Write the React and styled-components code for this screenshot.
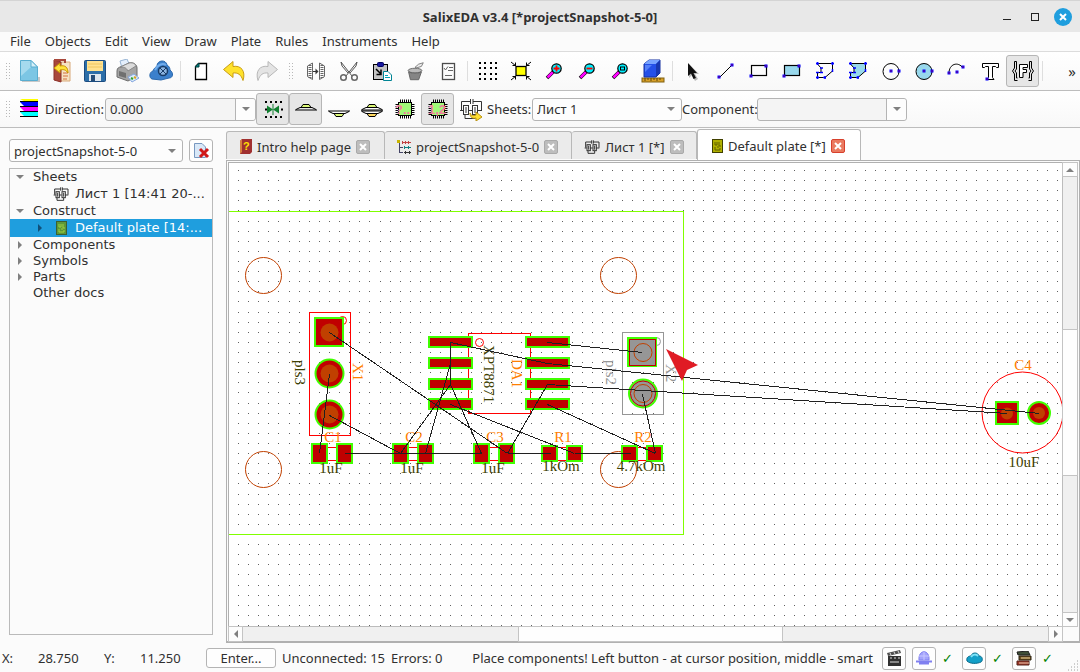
import React from 'react'
import styled, { createGlobalStyle } from 'styled-components'

const GlobalStyle = createGlobalStyle`
  html, body, #root {
    height: 100%;
  }
  body {
    margin: 0;
    background: #fbfbfb;
    color: #303030;
    font-family: 'Noto Sans', 'Open Sans', sans-serif;
    font-size: 13px;
    overflow: hidden;
  }
  * {
    box-sizing: border-box;
  }
  button, select {
    font: inherit;
    color: inherit;
    padding: 0;
    margin: 0;
  }
  svg {
    display: block;
    flex: none;
  }
`

const Window = styled.div`
  display: flex;
  flex-direction: column;
  height: 100vh;
`

const TitleBar = styled.header`
  display: grid;
  grid-template-columns: 1fr auto 1fr;
  align-items: center;
  flex: none;
  height: 32px;
  background: #e8e8e8;
  border-top: 1px solid #d4d4d4;
`

const Title = styled.h1`
  grid-column: 2;
  margin: 0;
  font-family: 'Open Sans', 'Noto Sans', sans-serif;
  font-size: 13px;
  font-weight: 700;
`

const WindowButtons = styled.div`
  display: flex;
  justify-content: flex-end;
  align-items: center;
  gap: 10px;
  padding-right: 8px;
`

const WindowButton = styled.button`
  display: flex;
  align-items: center;
  justify-content: center;
  width: 18px;
  height: 18px;
  border: 0;
  border-radius: 50%;
  background: ${(props) => (props.$close ? '#1f9ede' : 'transparent')};
`

const MenuBar = styled.nav`
  display: flex;
  align-items: flex-start;
  flex: none;
  height: 20px;
  padding-left: 10px;
  gap: 14px;
  border-bottom: 1px solid #dcdcdc;
`

const MenuItem = styled.button`
  border: 0;
  background: none;
  line-height: 18px;
`

const ToolBar = styled.div`
  display: flex;
  align-items: center;
  flex: none;
  height: ${(props) => props.$height}px;
  background: linear-gradient(#ffffff, #f8f8f8);
  border-bottom: 1px solid #bdbdbd;
`

const ToolButton = styled.button`
  display: flex;
  align-items: center;
  justify-content: center;
  flex: none;
  width: 33px;
  height: 32px;
  border: 1px solid ${(props) => (props.$checked ? '#b6b6b6' : 'transparent')};
  border-radius: 3px;
  background: ${(props) => (props.$checked ? '#e6e6e6' : 'none')};
`

const Separator = styled.div`
  flex: none;
  width: 1px;
  height: 20px;
  margin: 0 3px;
  background: #dedede;
`

const Handle = styled.div`
  flex: none;
  width: 5px;
  height: 18px;
  margin: 0 ${(props) => (props.$first ? 2 : 6)}px 0 5px;
  background: radial-gradient(circle, #b8b8b8 1px, transparent 1px) 0 0 / 3px 3px;
`

const Overflow = styled.button`
  margin-left: auto;
  margin-right: 4px;
  border: 0;
  background: none;
  font-size: 15px;
`

const FieldLabel = styled.label`
  flex: none;
  width: ${(props) => props.$width}px;
  white-space: nowrap;
`

const Combo = styled.div`
  display: flex;
  align-items: stretch;
  flex: none;
  width: ${(props) => props.$width}px;
  height: 23px;
  border: 1px solid #b4b4b4;
  border-radius: 3px;
  background: ${(props) => (props.$editable ? '#f4f4f4' : '#fdfdfd')};
  select {
    flex: 1;
    min-width: 0;
    padding-left: 4px;
    border: 0;
    background: none;
    appearance: none;
  }
`

const ComboArrow = styled.span`
  display: flex;
  align-items: center;
  justify-content: center;
  width: 20px;
  border-left: ${(props) => (props.$editable ? '1px solid #b4b4b4' : '0')};
  background: ${(props) => (props.$editable ? '#fdfdfd' : 'none')};
  border-radius: 0 3px 3px 0;
`

const Main = styled.main`
  display: flex;
  flex: 1;
  min-height: 0;
`

const Side = styled.aside`
  display: flex;
  flex-direction: column;
  flex: none;
  width: 226px;
  padding: 11px 13px 9px 9px;
`

const ProjectRow = styled.div`
  display: flex;
  justify-content: space-between;
  margin-bottom: 6px;
`

const SmallButton = styled.button`
  display: flex;
  align-items: center;
  justify-content: center;
  flex: none;
  width: 24px;
  height: 23px;
  border: 1px solid #b4b4b4;
  border-radius: 3px;
  background: #fefefe;
`

const Tree = styled.ul`
  flex: 1;
  margin: 0;
  padding: 0;
  list-style: none;
  border: 1px solid #bababa;
  font-family: 'DejaVu Sans', sans-serif;
  line-height: 16px;
`

const TreeRow = styled.li`
  display: flex;
  align-items: center;
  height: ${(props) => (props.$tall ? 18 : 16)}px;
  padding-left: ${(props) => props.$level * 20 + 6}px;
  background: ${(props) => (props.$selected ? '#1f9ede' : 'none')};
  color: ${(props) => (props.$selected ? '#ffffff' : 'inherit')};
  white-space: nowrap;
`

const TreeArrow = styled.div`
  display: flex;
  flex: none;
  width: 17px;
`

const TreeIcon = styled.div`
  display: flex;
  justify-content: center;
  flex: none;
  width: 16px;
  margin-right: 6px;
`

const Work = styled.section`
  display: flex;
  flex-direction: column;
  flex: 1;
  min-width: 0;
`

const TabBar = styled.div`
  display: flex;
  align-items: flex-end;
  flex: none;
  height: 32px;
`

const Tab = styled.div`
  display: flex;
  align-items: center;
  flex: none;
  width: ${(props) => props.$width}px;
  height: ${(props) => (props.$active ? 31 : 28)}px;
  margin-bottom: ${(props) => (props.$active ? 0 : 1)}px;
  padding: 2px 0 0 ${(props) => (props.$active ? 14 : 12)}px;
  gap: 5px;
  border: solid #b8b8b8;
  border-width: 1px 1px 0 ${(props) => (props.$first || props.$active ? 1 : 0)}px;
  background: ${(props) => (props.$active ? '#ffffff' : '#ebebeb')};
  border-radius: 3px 3px 0 0;
`

const TabLabel = styled.button`
  border: 0;
  background: none;
  white-space: nowrap;
`

const TabClose = styled.button`
  display: flex;
  align-items: center;
  justify-content: center;
  flex: none;
  width: 14px;
  height: 14px;
  border: 1px solid ${(props) => (props.$active ? '#d8402c' : '#a9a9a9')};
  border-radius: 2px;
  background: ${(props) => (props.$active ? '#ea7a60' : '#bdbdbd')};
`

const Frame = styled.div`
  display: grid;
  grid-template-columns: 1fr 16px;
  grid-template-rows: 1fr 15px;
  flex: 1;
  min-height: 0;
  margin-bottom: 1px;
  padding: 1px 1px 0 1px;
  border: 1px solid #b0b0b0;
  border-bottom-width: 2px;
  background: #fbfbfb;
`

const Board = styled.svg`
  width: 100%;
  height: 100%;
  min-width: 0;
  background: #ffffff;
  border: solid #b0b0b0;
  border-width: 1px 0 0 1px;
  text {
    font-family: 'Liberation Serif', serif;
    font-size: 15px;
  }
`

const ScrollBar = styled.div`
  display: flex;
  flex-direction: ${(props) => (props.$vertical ? 'column' : 'row')};
  min-width: 0;
  min-height: 0;
  background: #f0f0f0;
  border: solid #bcbcbc;
  border-width: ${(props) => (props.$vertical ? '1px 1px 0 1px' : '1px 0 0 1px')};
`

const ScrollEnd = styled.button`
  display: flex;
  align-items: center;
  justify-content: center;
  flex: 0 0 13px;
  border: 0;
  background: #fdfdfd;
  outline: 1px solid #c4c4c4;
`

const Track = styled.div`
  flex: ${(props) => props.$size};
`

const Thumb = styled.div`
  flex: ${(props) => props.$size};
  background: #fefefe;
  outline: 1px solid #c4c4c4;
`

const StatusBar = styled.footer`
  display: flex;
  align-items: center;
  flex: none;
  height: 28px;
  padding: 0 2px;
`

const Coord = styled.span`
  flex: none;
  width: ${(props) => props.$width}px;
`

const EnterButton = styled.button`
  flex: none;
  width: 70px;
  height: 20px;
  margin-right: 6px;
  border: 1px solid #b4b4b4;
  border-radius: 3px;
  background: #fefefe;
  line-height: 18px;
`

const StatusText = styled.span`
  flex: none;
  margin-right: 6px;
  white-space: nowrap;
`

const Hint = styled(StatusText)`
  margin-left: auto;
  margin-right: 9px;
`

const Services = styled.div`
  display: flex;
  align-items: center;
  gap: 6px;
`

const Check = styled.span`
  width: 14px;
  color: #008000;
  font-family: 'DejaVu Sans', sans-serif;
`

const SizeGrip = styled.svg`
  align-self: flex-end;
  margin-left: 12px;
`

const Down = ({ color = '#808080' }) => (
  <svg width="8" height="4"><path d="M0 0H8L4 4Z" fill={color} /></svg>
)

const Icon = ({ children, size = 24 }) => (
  <svg width={size} height={size} viewBox="0 0 24 24" fill="none" stroke="#000">{children}</svg>
)

const Dot = ({ x, y }) => <rect x={x - 1} y={y - 1} width="2" height="2" fill="#f00" stroke="#00f" />

const NewFile = () => (
  <Icon>
    <path d="M5 22H22V18" stroke="#c8c8c8" strokeWidth="2" />
    <path d="M3.5 1.5H14L20.5 8V21.5H3.5Z" fill="#7cc6e4" stroke="#58add0" />
    <path d="M4 2H14V8L4 17Z" fill="#a5daee" stroke="none" />
    <path d="M14 1.5V8H20.5Z" fill="#d6f0f9" stroke="#58add0" />
  </Icon>
)

const OpenFile = () => (
  <Icon>
    <path d="M9 3H20V22H9Z" fill="#f6e3c4" stroke="#d8a878" />
    <path d="M4 1L11 3V23L4 21Z" fill="#a8483c" stroke="#8c3028" />
    <path d="M4 1H15V4" stroke="#a8483c" strokeWidth="2" />
    <path d="M13 14H18M13 17H18M13 20H17" stroke="#d47040" />
    <path d="M4 9L10 4V7C15 6 18 8 18 14C16 11 14 10 10 11V14Z" fill="#ffe23c" stroke="#c79400" />
  </Icon>
)

const Save = () => (
  <Icon>
    <rect x="1.5" y="1.5" width="21" height="21" rx="1" fill="#2c6ea8" stroke="#1c4c80" />
    <rect x="4" y="2" width="16" height="10" fill="#ffe290" stroke="none" />
    <path d="M5 5H19M5 8H19" stroke="#eec660" />
    <rect x="6" y="15" width="12" height="7" fill="#dde6ee" stroke="none" />
    <rect x="8" y="16" width="4" height="6" fill="#244c78" stroke="none" />
  </Icon>
)

const Print = () => (
  <Icon>
    <path d="M6 9L4 2L11 0L14 7Z" fill="#e4effc" stroke="#98b4d4" />
    <path d="M1 12C1 9 3 8 5 8L13 4C18 3 21 6 21 9V17L12 22L1 18Z" fill="#a4a4a4" stroke="#6c6c6c" />
    <path d="M4 8L13 4C18 3 20 6 20 7L12 12C10 8 7 8 4 8Z" fill="#dcdcdc" stroke="#888" />
    <path d="M3 12L10 14V19L3 17Z" fill="#707070" stroke="none" />
    <path d="M12 18L18 15L23 19L16 23Z" fill="#d8ecf8" stroke="#88a8e0" />
    <path d="M15 19L17 20" stroke="#30a030" strokeWidth="2" />
    <path d="M18 18L20 19" stroke="#e0a020" strokeWidth="2" />
  </Icon>
)

const Cloud = () => (
  <Icon>
    <path d="M3 20C0 19 0 13 4 12C5 9 7 8 8 7C8 1 17 0 18 6C20 7 21 9 21 11C25 14 24 19 20 19L12 21Z" fill="#3c80cc" stroke="#2c68ac" />
    <path d="M6 11C9 5 14 4 17 6" stroke="#70acec" strokeWidth="2" />
    <circle cx="14" cy="12" r="4.500" fill="#8cb4e0" stroke="#183c68" strokeWidth="1.500" />
    <path d="M11 9L17 15M17 9L11 15" stroke="#183c68" />
  </Icon>
)

const Page = () => (
  <Icon>
    <path d="M9.500 4.500H17.500V20.500H6.500V7.500Z" fill="#fff" strokeWidth="1.300" />
    <path d="M6 8L10 4V8Z" fill="#008080" stroke="#004040" />
  </Icon>
)

const Undo = ({ redo }) => (
  <Icon>
    <path
      d="M1.500 10.500L11 2.500V7.500C19 6 24 12 21 21.500C19 15.500 16 13.500 11 14V18.500Z"
      transform={redo ? 'translate(24 0) scale(-1 1)' : undefined}
      fill={redo ? '#e4e4e4' : '#ffe22c'}
      stroke={redo ? '#b8b8b8' : '#c89c14'}
      strokeLinejoin="round"
    />
  </Icon>
)

const Mirror = () => (
  <Icon>
    <g stroke="#666">
      <path d="M3.500 7L8.500 4V20.500L3.500 17.500Z" />
      <path d="M20.500 7L15.500 4V20.500L20.500 17.500Z" />
      <path d="M6 6V19M18 6V19" strokeDasharray="1 1" strokeWidth="3" />
      <path d="M9 12.500H13" stroke="#333" />
    </g>
    <path d="M11.500 9.500L14.500 12.500L11.500 15.500Z" fill="#333" stroke="none" />
  </Icon>
)

const Cut = () => (
  <Icon>
    <path d="M4 3L15 17M20 3L9 17M4 3L5 7L11 14M20 3L19 7L13 14" stroke="#555" />
    <circle cx="6.500" cy="18.500" r="2.800" stroke="#666" strokeWidth="1.500" />
    <circle cx="17.500" cy="18.500" r="2.800" stroke="#666" strokeWidth="1.500" />
  </Icon>
)

const Paste = () => (
  <Icon>
    <rect x="3.500" y="5.500" width="14" height="15" fill="#c4c4c4" />
    <rect x="7.500" y="3.500" width="6" height="4" rx="1" fill="#1818a0" stroke="#000060" />
    <path d="M6 10L11 15M11 10.500V15.500H6.500" strokeWidth="1.500" />
    <path d="M13.500 12.500H18L21.500 16V21.500H13.500Z" fill="#fff" stroke="#008494" />
    <path d="M15 16.500H18M15 18.500H20" stroke="#00a4b4" />
  </Icon>
)

const Bin = () => (
  <Icon size={22}>
    <ellipse cx="12" cy="11.500" rx="7.500" ry="2.500" fill="#bbb" stroke="#666" />
    <path d="M5 13L7 21.500H16L19 13C15 15 9 15 5 13Z" fill="#858585" stroke="#606060" />
    <path d="M12 8L16 4.500L21 3L19 7L14 8.500Z" fill="#eee" stroke="#777" />
  </Icon>
)

const CheckList = () => (
  <Icon>
    <rect x="6.500" y="4.500" width="12" height="16" stroke="#4c4c4c" strokeWidth="1.300" />
    <path d="M8 9L9.500 11L12 7.500M13 8.500H17M12 11.500H17M9 16.500H16" stroke="#666" />
  </Icon>
)

const dots = [4, 9, 15, 20]
const GridDots = () => (
  <Icon>
    {dots.map((y) => dots.map((x) => (
      <rect key={`${x}-${y}`} x={x - 1} y={y - 1} width="2" height="2" fill="#000" stroke="none" />
    )))}
  </Icon>
)

const Fit = () => (
  <Icon>
    <rect x="7" y="7.500" width="10" height="9" fill="#ff0" strokeWidth="1.300" />
    <path d="M2 3L7 7M22 3L17 7M2 21L7 17M22 21L17 17" />
    <path d="M3.500 6.500H6.500V3.500M20.500 6.500H17.500V3.500M3.500 17.500H6.500V20.500M20.500 17.500H17.500V20.500" />
  </Icon>
)

const Zoom = ({ kind }) => (
  <Icon>
    <path d="M5 19L11 13" stroke="#000" strokeWidth="3.500" />
    <path d="M5.500 18.500L11 13" stroke="#f0f" strokeWidth="2.500" />
    <circle cx="14.500" cy="9.500" r="4.700" fill="#00f0ff" strokeWidth="1.200" />
    {kind === 'all'
      ? <rect x="12.500" y="8" width="4" height="3" />
      : <path d={kind === 'in' ? 'M11.500 9.500H17.500M14.500 6.500V12.500' : 'M11.500 9.500H17.500'} stroke="#f00" strokeWidth="1.800" />}
  </Icon>
)

const Box3d = () => (
  <Icon>
    <rect x="1" y="19" width="22" height="4" fill="#d8a028" stroke="#806010" />
    <path d="M4 19V22M7 19V21M10 19V22M13 19V21M16 19V22M19 19V21" stroke="#604808" />
    <path d="M3 5L8 1H19V14L15 18H3Z" fill="#2450e8" stroke="#1430a0" />
    <path d="M3 5L8 1H19L15 5Z" fill="#78a4ff" stroke="none" />
    <path d="M15 5L19 1V14L15 18Z" fill="#1838b0" stroke="none" />
    <path d="M4 6H11L4 13Z" fill="#5480f8" stroke="none" />
  </Icon>
)

const Pointer = () => (
  <Icon>
    <path d="M8 5V19L11 16L14 22L17 20L14 15H18Z" fill="#bbb" stroke="none" />
    <path d="M7 4V17L10 14.500L12.500 20L15 19L12.500 14H16Z" fill="#111" stroke="none" />
  </Icon>
)

const LineIcon = () => (
  <Icon><path d="M5 19L19 5" /><Dot x={5} y={18} /><Dot x={18} y={6} /></Icon>
)

const RectIcon = ({ fill }) => (
  <Icon><rect x="4.500" y="6.500" width="15" height="10" fill={fill} strokeWidth="1.200" /><Dot x={4} y={17} /><Dot x={19} y={7} /></Icon>
)

const PolyIcon = ({ fill }) => (
  <Icon>
    <path d="M4 4.500H19.500V12L12 18.500H4.500V13.500H8V9Z" fill={fill} />
    <path d="M4.500 3V6M3 4.500H6M19.500 3V6M18 4.500H21M19.500 10V13M12 17V20M10 18.500H13M4.500 17V20M3 18.500H6M3 13.500H6M7 13.500H10M7 9H10" stroke="#00f" strokeWidth="1.500" />
  </Icon>
)

const CircleIcon = ({ fill }) => (
  <Icon><circle cx="12" cy="12.500" r="8" fill={fill} /><Dot x={12} y={12} /><Dot x={20} y={12} /></Icon>
)

const ArcIcon = () => (
  <Icon><path d="M4 14C4 5 13 2 18 9" /><Dot x={4} y={14} /><Dot x={12} y={13} /><Dot x={18} y={8} /></Icon>
)

const TextIcon = () => (
  <Icon>
    <path d="M4.500 4.500H20.500V8.500H18.500L17.500 7.500H14.500V18.500L16 20.500H9L10.500 18.500V7.500H7.500L6.500 8.500H4.500Z" fill="#fff" />
    <Dot x={9} y={20} />
  </Icon>
)

const ParamIcon = () => (
  <Icon>
    <path d="M5.500 2.500H3.500V9L1.500 12L3.500 15V21.500H6.500M5.500 2.500V10L4 12L5.500 14V19H6.500" />
    <path d="M18.500 2.500H20.500V9L22.500 12L20.500 15V21.500H17.500M18.500 2.500V10L20 12L18.500 14V19H17.500" />
    <path d="M8.500 5.500H16.500V8.500H12V10.500H15.500V13.500H12V18.500H8.500Z" fill="#fff" />
  </Icon>
)

const Layers = () => (
  <svg width="18" height="20" viewBox="0 0 18 20">
    <path d="M0 0H18V2H4Z" fill="#ff0" />
    <path d="M0 3H18V7H4Z" fill="#00f" />
    <path d="M0 8H18V12H4Z" fill="#f0f" />
    <path d="M0 13H18V17H4Z" fill="#0ff" />
    <path d="M0 2.500H18M0 7.500H18M0 12.500H18M0 17.500H18" stroke="#000" />
  </svg>
)

const AlignIcon = () => (
  <Icon>
    <path d="M4 5H22M4 12.500H6M20 12.500H22M4 20H22" strokeDasharray="2 3" strokeWidth="2" />
    <path d="M6 8.500L12 12.500L6 16.500ZM18 8.500L12 12.500L18 16.500Z" fill="#108030" stroke="none" />
    <path d="M12 7V18" stroke="#108030" />
  </Icon>
)

const topPart = 'M7 10.500L9 7.500H15L17 10.500Z'

const SideIcon = ({ top, bottom }) => (
  <Icon>
    {top && (
      <g>
        <path d="M1 13H23M2 12.500L6 10.500H18L22 12.500" />
        <path d={topPart} fill="#dcf878" />
      </g>
    )}
    {bottom && (
      <g transform="translate(0 27) scale(1 -1)">
        <path d="M1 13H23M2 12.500L6 10.500H18L22 12.500" />
        <path d={topPart} fill={top ? '#ffd860' : '#dcf878'} />
      </g>
    )}
  </Icon>
)

const ChipIcon = ({ label }) => (
  <Icon>
    <rect x="5.500" y="5.500" width="13" height="13" fill="#a0f878" />
    <path d="M7 4H18M7 20H18" strokeDasharray="1 1" strokeWidth="3" />
    <path d="M4 7V18M20 7V18" strokeDasharray="1 1" strokeWidth="3" />
    <text x="2" y="17" fill="#f080a0" stroke="none" fontFamily="Liberation Sans" fontSize="13" fontWeight="700">{label}</text>
  </Icon>
)

const SheetIcon = ({ arrow, size }) => (
  <Icon size={size}>
    <g stroke="#333" strokeWidth={arrow ? 1 : 1.5}>
      <path d="M1 13.500H4M9 13.500H13M18 13.500H23M2.500 13V4.500H11M14 4.500H22.500V13M11.500 2V7M14 2V7M6 18V21.500H16V18" />
      <rect x="4.500" y="8.500" width="5" height="9" />
      <rect x="13.500" y="8.500" width="5" height="9" />
      <path d="M7 10V16M16 10V16" />
    </g>
    {arrow && <path d="M11 16C12 19 14 19 17 18V15L23 20L17 24V21C13 22 11 20 11 16Z" fill="#ffe030" stroke="#b89010" />}
  </Icon>
)

const PlateIcon = ({ selected }) => (
  <svg width="11" height="14" viewBox="0 0 11 14">
    <rect x="0.500" y="0.500" width="10" height="13" fill={selected ? '#5c9838' : '#b0b000'} stroke={selected ? '#3c6030' : '#404000'} />
    <path d="M3 3V6H5V3M7 3V7H9M3 8V11H8V9M5 8H7" fill="none" stroke={selected ? '#a0d040' : '#606000'} />
  </svg>
)

const HelpIcon = () => (
  <svg width="13" height="15" viewBox="0 0 13 15">
    <path d="M1 2L3 0H13V13L11 15H1Z" fill="#a03030" />
    <path d="M1 2L3 0V13L1 15Z" fill="#d88040" />
    <text x="4" y="11" fill="#ffe000" fontFamily="Liberation Sans" fontSize="11" fontWeight="700">?</text>
  </svg>
)

const ProjectIcon = () => (
  <svg width="14" height="14" viewBox="0 0 14 14" fill="none" shapeRendering="crispEdges">
    <path d="M2.500 1V12.500H6M2.500 7.500H6" stroke="#446" />
    <rect x="0" y="0" width="3" height="3" fill="#c8b400" />
    <path d="M5 2.500H14M5 1V4M8.500 1V4M11.500 1V4" stroke="#c04040" />
    <path d="M7 7.500H14M7.500 6V9M11.500 6V9" stroke="#108080" />
    <path d="M7 12.500H14M8.500 11V14M12.500 11V14" stroke="#333" />
  </svg>
)

const Cross = () => (
  <svg width="8" height="8" viewBox="0 0 8 8"><path d="M1 1L7 7M7 1L1 7" stroke="#fff" strokeWidth="2" /></svg>
)

const ClosePage = () => (
  <svg width="17" height="17" viewBox="0 0 17 17">
    <path d="M1.500 1.500H9L12.500 5V15.500H1.500Z" fill="#d8e8f8" stroke="#7898c0" />
    <path d="M7 7L15 15M15 7L7 15" stroke="#d01818" strokeWidth="3" />
  </svg>
)

const Clapper = () => (
  <svg width="15" height="16" viewBox="0 0 15 16">
    <rect x="1" y="6" width="13" height="10" fill="#303030" />
    <path d="M0 3L13 0L14 3L1 6Z" fill="#505050" />
    <path d="M3 3L4 5M7 2L8 4M11 1L12 3M3 8H5M7 8H9M11 8H13M3 12H12" stroke="#ddd" />
  </svg>
)

const Globe = () => (
  <svg width="16" height="14" viewBox="0 0 16 14" fill="none">
    <path d="M3 9C2 -2 14 -2 13 9Z" fill="#a4a4fc" stroke="#8080f0" />
    <path d="M8 1V9M3 5H13" stroke="#c8c8ff" />
    <path d="M0 10.500H16M3 12.500H13" stroke="#8080f0" strokeWidth="2" />
  </svg>
)

const CloudSmall = () => (
  <svg width="17" height="12" viewBox="0 0 17 12">
    <path d="M1 9C0 5 3 4 5 4C6 0 12 0 13 4C17 4 17 9 15 10C11 12 4 12 1 9Z" fill="#14a0c8" stroke="#086888" />
    <path d="M5 5C7 2 10 2 12 4" stroke="#80e4f8" strokeWidth="2" fill="none" />
  </svg>
)

const Books = () => (
  <svg width="16" height="15" viewBox="0 0 16 15">
    <path d="M1 1L12 0L14 4H2Z" fill="#405038" stroke="#202020" />
    <path d="M3 5H15V9H3Z" fill="#705020" stroke="#282010" />
    <path d="M5 7H14M3 12H12" stroke="#f0d8a0" />
    <path d="M1 10H13V14H1Z" fill="#a03828" stroke="#502018" />
    <path d="M3 12H13" stroke="#e8c8b0" />
  </svg>
)

const fileTools = [
  ['New', <NewFile />],
  ['Open', <OpenFile />],
  ['Save', <Save />],
  ['Print', <Print />],
  ['Cloud', <Cloud />],
]
const editTools = [
  ['Mirror', <Mirror />],
  ['Cut', <Cut />],
  ['Paste', <Paste />],
  ['Delete', <Bin />],
  ['Properties', <CheckList />],
]
const viewTools = [
  ['Grid', <GridDots />],
  ['Fit', <Fit />],
  ['Zoom in', <Zoom kind="in" />],
  ['Zoom out', <Zoom kind="out" />],
  ['Zoom all', <Zoom kind="all" />],
  ['3D view', <Box3d />],
]
const drawTools = [
  ['Select', <Pointer />],
  ['Line', <LineIcon />],
  ['Rectangle', <RectIcon />],
  ['Filled rectangle', <RectIcon fill="#98d8ec" />],
  ['Polygon', <PolyIcon />],
  ['Filled polygon', <PolyIcon fill="#98d8ec" />],
  ['Circle', <CircleIcon />],
  ['Filled circle', <CircleIcon fill="#98d8ec" />],
  ['Arc', <ArcIcon />],
  ['Text', <TextIcon />],
]

const renderTools = (tools) => tools.map(([name, icon]) => (
  <ToolButton key={name} aria-label={name}>{icon}</ToolButton>
))

// board grid, the pitch is about 10.1 px so every dot is snapped to a whole pixel
let gridPath = ''
for (let row = 0; row < 120; row++) {
  for (let col = 0; col < 200; col++) {
    gridPath += `M${Math.round(238 + col * 10.115)} ${Math.round(170 + row * 10.11) + 0.5}h1`
  }
}

const wires = [
  [329, 332, 507, 453], [329, 374, 319, 453], [329, 415, 400, 453],
  [344, 453, 481, 453], [507, 453, 550, 453], [574, 453, 630, 453],
  [450, 342, 450, 384], [450, 342, 547, 363], [547, 363, 1039, 413],
  [450, 363, 425, 453], [450, 384, 400, 453], [450, 384, 481, 453],
  [450, 404, 574, 453], [547, 384, 507, 453], [547, 404, 655, 453],
  [547, 342, 642, 352], [642, 394, 655, 453], [547, 384, 1007, 413],
]

const chips = [
  { name: 'C1', value: '1uF', x: 332, h: 21, base: 473 },
  { name: 'C2', value: '1uF', x: 413, h: 21, base: 473 },
  { name: 'C3', value: '1uF', x: 494, h: 21, base: 473 },
  { name: 'R1', value: '1kOm', x: 562, h: 17, base: 471 },
  { name: 'R2', value: '4.7kOm', x: 642, h: 17, base: 471 },
]

const Pad = ({ x, y, w, h, fill = '#c00000' }) => (
  <rect x={x - w / 2 + 1} y={y - h / 2 + 1} width={w - 2} height={h - 2} fill={fill} stroke="#40ff00" strokeWidth="2" shapeRendering="crispEdges" />
)

const RoundPad = ({ x, y, r, hole }) => (
  <g>
    <circle cx={x} cy={y} r={r - 1} fill="#c00000" stroke="#40ff00" strokeWidth="2" />
    <circle cx={x} cy={y} r={hole} fill="#c04000" />
  </g>
)

const VText = ({ x, y, fill, children }) => (
  <text transform={`translate(${x} ${y}) rotate(90)`} fill={fill}>{children}</text>
)

const ORANGE = '#ff8000'
const OLIVE = '#404000'
const GREY = '#969696'

function PlateView() {
  return (
    <Board role="img" aria-label="Default plate">
      <g transform="translate(-229 -163)">
        <path d={gridPath} stroke="#606060" shapeRendering="crispEdges" />
        <path d="M220 211.500H683.500V534.500H220" fill="none" stroke="#80ff00" shapeRendering="crispEdges" />

        {[[263.5, 275.5], [618.5, 275.5], [263.5, 469.5], [618.5, 469.5]].map(([x, y]) => (
          <circle key={`${x}-${y}`} cx={x} cy={y} r="18" fill="none" stroke="#c04000" />
        ))}

        <g fill="none" stroke="#ff0000">
          <rect x="309.500" y="312.500" width="41" height="123" />
          <circle cx="342.500" cy="320.500" r="4" />
          <rect x="468.500" y="333.500" width="62" height="80" />
          <circle cx="479.500" cy="342.500" r="4" />
          <circle cx="1022.500" cy="412.500" r="40.500" />
        </g>

        <Pad x={329} y={332} w={30} h={30} />
        <circle cx="329.500" cy="332.500" r="9" fill="#c04000" />
        <RoundPad x={329.5} y={373.5} r={15} hole={9} />
        <RoundPad x={329.5} y={414.5} r={15} hole={9} />
        {[342, 363, 384, 404].map((y) => (
          <g key={y}>
            <Pad x={450.5} y={y} w={45} h={12} />
            <Pad x={547.5} y={y} w={45} h={12} />
          </g>
        ))}
        <Pad x={1007} y={413} w={24} h={24} />
        <circle cx="1007" cy="413.500" r="6" fill="#c04000" />
        <RoundPad x={1039} y={413} r={12} hole={6} />

        <g fill="none" stroke={GREY}>
          <rect x="622.500" y="332.500" width="41" height="82" />
          <circle cx="656.500" cy="341.500" r="4" />
        </g>
        <Pad x={642} y={352} w={30} h={30} fill={GREY} />
        <rect x="629.500" y="339.500" width="26" height="26" fill="none" stroke="#c00000" />
        <circle cx="643" cy="352.500" r="9" fill="none" stroke="#c04000" />
        <circle cx="643" cy="393.500" r="14" fill={GREY} stroke="#40ff00" strokeWidth="2" />
        <circle cx="643" cy="393.500" r="12.500" fill="none" stroke="#c00000" />
        <circle cx="643" cy="393.500" r="9" fill="none" stroke="#c04000" />

        {chips.map((c) => (
          <g key={c.name}>
            <path d={`M${c.x - 4} 447.500h9M${c.x - 4} 460.500h9`} stroke="#ff0000" />
            <Pad x={c.x - 12.5} y={453.5} w={17} h={c.h} />
            <Pad x={c.x + 12.5} y={453.5} w={17} h={c.h} />
            <text x={c.x + 1} y="442" fill={ORANGE} textAnchor="middle">{c.name}</text>
            <text x={c.x - 1} y={c.base} fill={OLIVE} textAnchor="middle">{c.value}</text>
          </g>
        ))}

        <text x="1023" y="370" fill={ORANGE} textAnchor="middle">C4</text>
        <text x="1024" y="467" fill={OLIVE} textAnchor="middle">10uF</text>
        <VText x={295} y={360} fill={OLIVE}>pls3</VText>
        <VText x={353} y={363} fill={ORANGE}>X1</VText>
        <VText x={484} y={345} fill={OLIVE}>XPT8871</VText>
        <VText x={512} y={359} fill={ORANGE}>DA1</VText>
        <VText x={606} y={360} fill={GREY}>pls2</VText>
        <VText x={666} y={364} fill={GREY}>X2</VText>

        <g stroke="#202020" shapeRendering="crispEdges">
          {wires.map((w) => (
            <line key={w.join()} x1={w[0] + 0.5} y1={w[1] + 0.5} x2={w[2] + 0.5} y2={w[3] + 0.5} />
          ))}
        </g>
        <path d="M666 349L698 365L687 370L682 381Z" fill="#e01b24" />
      </g>
    </Board>
  )
}

function ComboBox({ id, value, width, editable, label }) {
  return (
    <Combo $width={width} $editable={editable}>
      <select id={id} defaultValue={value} aria-label={label}>
        <option>{value}</option>
      </select>
      <ComboArrow $editable={editable}><Down /></ComboArrow>
    </Combo>
  )
}

const tree = [
  { text: 'Sheets', open: true, level: 0 },
  { text: 'Лист 1 [14:41 20-...', level: 1, icon: <SheetIcon size={16} /> },
  { text: 'Construct', open: true, level: 0 },
  { text: 'Default plate [14:...', closed: true, level: 1, icon: <PlateIcon selected />, selected: true },
  { text: 'Components', closed: true, level: 0 },
  { text: 'Symbols', closed: true, level: 0 },
  { text: 'Parts', closed: true, level: 0 },
  { text: 'Other docs', level: 0 },
]

const tabs = [
  { text: 'Intro help page', width: 159, icon: <HelpIcon /> },
  { text: 'projectSnapshot-5-0', width: 187, icon: <ProjectIcon /> },
  { text: 'Лист 1 [*]', width: 125, icon: <SheetIcon size={16} /> },
  { text: 'Default plate [*]', width: 164, icon: <PlateIcon />, active: true },
]

const menu = ['File', 'Objects', 'Edit', 'View', 'Draw', 'Plate', 'Rules', 'Instruments', 'Help']

export default function App() {
  return (
    <Window>
      <GlobalStyle />
      <TitleBar>
        <Title>SalixEDA v3.4 [*projectSnapshot-5-0]</Title>
        <WindowButtons>
          <WindowButton aria-label="Minimize"><svg width="8" height="8"><path d="M0 6.500H8" stroke="#222" /></svg></WindowButton>
          <WindowButton aria-label="Maximize"><svg width="8" height="8"><rect x="0.500" y="0.500" width="7" height="7" fill="none" stroke="#222" /></svg></WindowButton>
          <WindowButton $close aria-label="Close"><Cross /></WindowButton>
        </WindowButtons>
      </TitleBar>
      <MenuBar>
        {menu.map((item) => <MenuItem key={item}>{item}</MenuItem>)}
      </MenuBar>

      <ToolBar $height={39}>
        <Handle $first />
        {renderTools(fileTools)}
        <Separator />
        <ToolButton aria-label="Page"><Page /></ToolButton>
        <ToolButton aria-label="Undo"><Undo /></ToolButton>
        <ToolButton aria-label="Redo"><Undo redo /></ToolButton>
        <Handle />
        {renderTools(editTools)}
        <Separator />
        {renderTools(viewTools)}
        <Separator />
        {renderTools(drawTools)}
        <ToolButton $checked aria-label="Param"><ParamIcon /></ToolButton>
        <Separator />
        <Overflow aria-label="More tools">»</Overflow>
      </ToolBar>

      <ToolBar $height={37}>
        <Handle $first />
        <ToolButton aria-label="Layers"><Layers /></ToolButton>
        <FieldLabel htmlFor="direction" $width={60}>Direction:</FieldLabel>
        <ComboBox id="direction" value="0.000" width={151} editable />
        <ToolButton $checked aria-label="Align"><AlignIcon /></ToolButton>
        <ToolButton $checked aria-label="Top side"><SideIcon top /></ToolButton>
        <ToolButton aria-label="Bottom side"><SideIcon bottom /></ToolButton>
        <ToolButton aria-label="Both sides"><SideIcon top bottom /></ToolButton>
        <ToolButton aria-label="Unnumbered parts"><ChipIcon label="?.." /></ToolButton>
        <ToolButton $checked aria-label="Numbered parts"><ChipIcon label="1,2" /></ToolButton>
        <ToolButton aria-label="From sheet"><SheetIcon arrow size={24} /></ToolButton>
        <FieldLabel htmlFor="sheets" $width={45}>Sheets:</FieldLabel>
        <ComboBox id="sheets" value="Лист 1" width={150} />
        <FieldLabel htmlFor="component" $width={75}>Component:</FieldLabel>
        <ComboBox id="component" value="" width={150} editable />
      </ToolBar>

      <Main>
        <Side>
          <ProjectRow>
            <ComboBox value="projectSnapshot-5-0" width={174} label="Project" />
            <SmallButton aria-label="Close project"><ClosePage /></SmallButton>
          </ProjectRow>
          <Tree>
            {tree.map((row) => (
              <TreeRow key={row.text} $level={row.level} $tall={!!row.icon} $selected={row.selected}>
                <TreeArrow>
                  {row.open && <Down />}
                  {row.closed && (
                    <svg width="8" height="8"><path d="M2 0L6 4L2 8Z" fill={row.selected ? '#10507a' : '#808080'} /></svg>
                  )}
                </TreeArrow>
                {row.icon && <TreeIcon>{row.icon}</TreeIcon>}
                <span>{row.text}</span>
              </TreeRow>
            ))}
          </Tree>
        </Side>

        <Work>
          <TabBar>
            {tabs.map((tab, i) => (
              <Tab key={tab.text} $width={tab.width} $active={tab.active} $first={i === 0}>
                {tab.icon}
                <TabLabel>{tab.text}</TabLabel>
                <TabClose $active={tab.active} aria-label="Close tab"><Cross /></TabClose>
              </Tab>
            ))}
          </TabBar>
          <Frame>
            <PlateView />
            <ScrollBar $vertical>
              <ScrollEnd aria-label="Up"><svg width="8" height="4"><path d="M0 4H8L4 0Z" fill="#808080" /></svg></ScrollEnd>
              <Track $size={153} />
              <Thumb $size={145} />
              <Track $size={137} />
              <ScrollEnd aria-label="Down"><Down /></ScrollEnd>
            </ScrollBar>
            <ScrollBar>
              <ScrollEnd aria-label="Left"><svg width="4" height="8"><path d="M4 0V8L0 4Z" fill="#808080" /></svg></ScrollEnd>
              <Track $size={277} />
              <Thumb $size={263} />
              <Track $size={267} />
              <ScrollEnd aria-label="Right"><svg width="4" height="8"><path d="M0 0V8L4 4Z" fill="#808080" /></svg></ScrollEnd>
            </ScrollBar>
          </Frame>
        </Work>
      </Main>

      <StatusBar>
        <Coord $width={36}>X:</Coord>
        <Coord $width={66}>28.750</Coord>
        <Coord $width={36}>Y:</Coord>
        <Coord $width={66}>11.250</Coord>
        <EnterButton>Enter...</EnterButton>
        <StatusText>Unconnected: 15</StatusText>
        <StatusText>Errors: 0</StatusText>
        <Hint>Place components! Left button - at cursor position, middle - smart</Hint>
        <Services>
          <SmallButton aria-label="Video"><Clapper /></SmallButton>
          <SmallButton aria-label="Server"><Globe /></SmallButton>
          <Check>✓</Check>
          <SmallButton aria-label="Cloud"><CloudSmall /></SmallButton>
          <Check>✓</Check>
          <SmallButton aria-label="Library"><Books /></SmallButton>
          <Check>✓</Check>
        </Services>
        <SizeGrip width="10" height="12">
          <path d="M9 1h1M6 4h1M9 4h1M3 7h1M6 7h1M9 7h1M0 10h1M3 10h1M6 10h1M9 10h1" stroke="#a0a0a0" />
        </SizeGrip>
      </StatusBar>
    </Window>
  )
}
